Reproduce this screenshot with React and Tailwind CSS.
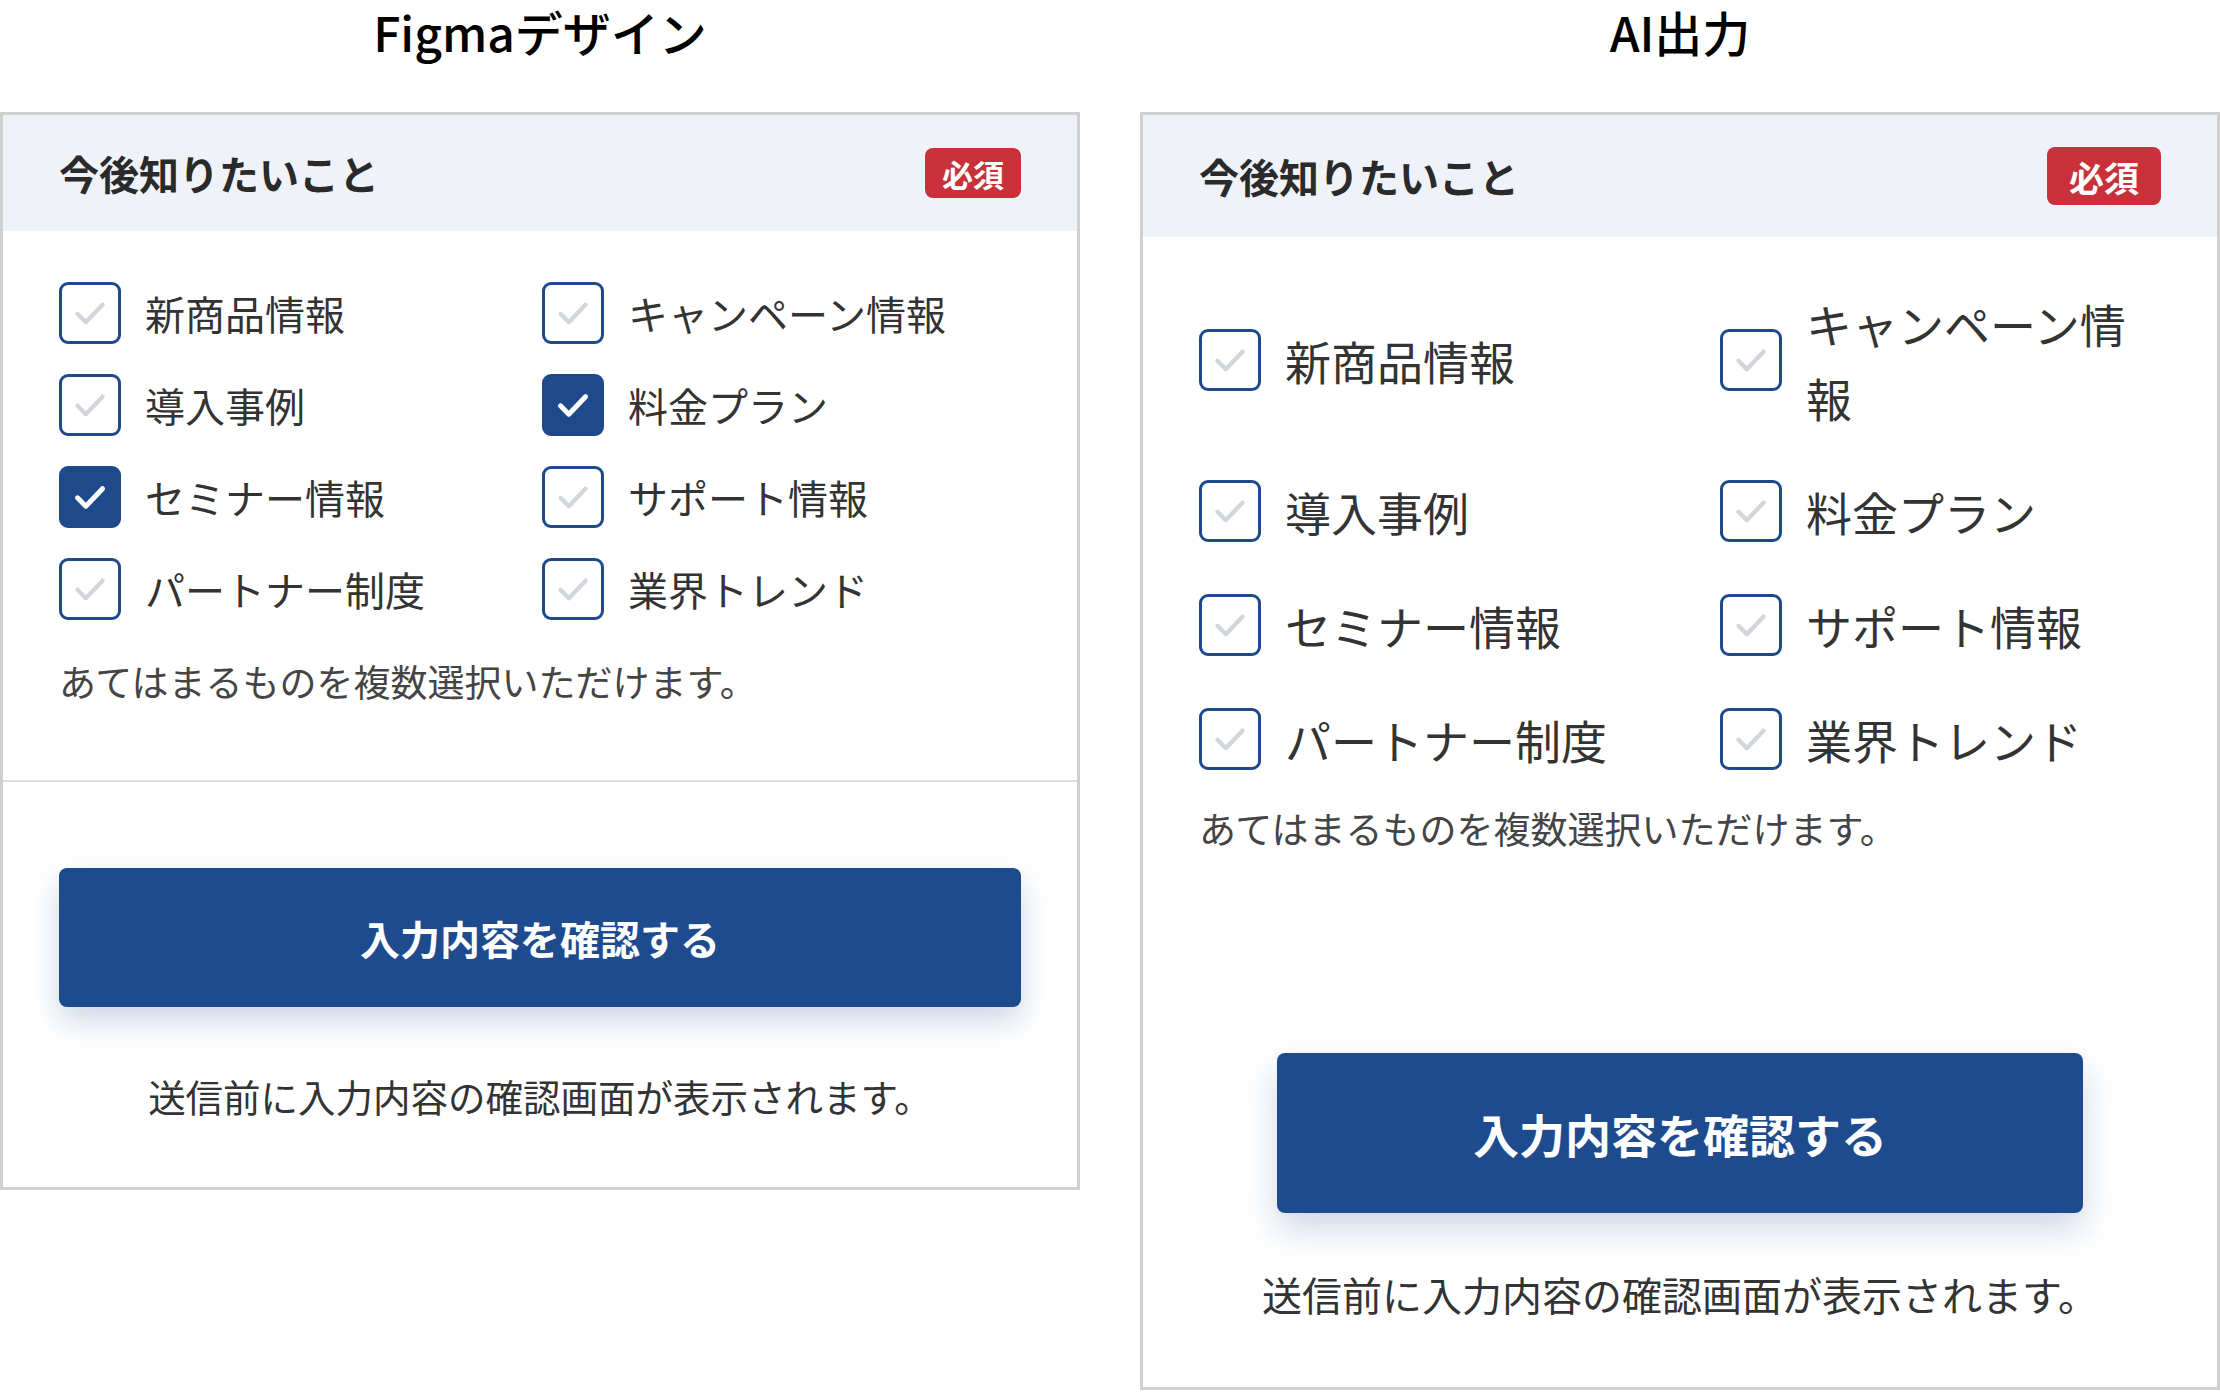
import React from "react";

function Check({ checked }) {
  return (
    <span
      className={
        "flex h-[62px] w-[62px] shrink-0 items-center justify-center rounded-[9px] border-[3px] border-[#1e4a8c] " +
        (checked ? "bg-[#1e4a8c]" : "bg-white")
      }
    >
      <svg viewBox="0 0 24 24" className="h-[40px] w-[40px]" fill="none">
        <path
          d="M4.5 12.5l5 5L19.5 7"
          stroke={checked ? "#ffffff" : "#d2d6dc"}
          strokeWidth={checked ? 3 : 2.6}
          strokeLinecap="round"
          strokeLinejoin="round"
        />
      </svg>
    </span>
  );
}

const items = [
  ["新商品情報", false],
  ["キャンペーン情報", false],
  ["導入事例", false],
  ["料金プラン", true],
  ["セミナー情報", true],
  ["サポート情報", false],
  ["パートナー制度", false],
  ["業界トレンド", false],
];

export default function App() {
  return (
    <div className="flex w-[2220px] items-start gap-[60px] bg-white font-['Noto_Sans_CJK_JP','Noto_Sans',sans-serif] text-[#2b2b2b]">
      {/* Figma column */}
      <div className="flex w-[1080px] flex-col">
        <div className="h-[112px] text-center text-[48px] font-medium leading-[62px] text-black">
          Figmaデザイン
        </div>
        <div className="border-[3px] border-[#d0d0d0]">
          <div className="flex h-[116px] items-center justify-between bg-[#eff3f9] px-[56px]">
            <h2 className="text-[40px] font-bold leading-none text-[#2a2a2a]">今後知りたいこと</h2>
            <span className="flex h-[50px] items-center rounded-[8px] bg-[#c8313a] px-[17px] text-[31px] font-bold leading-none text-white">
              必須
            </span>
          </div>
          <div className="px-[56px] pb-[72px] pt-[51px]">
            <div className="grid grid-cols-2 gap-x-[4px] gap-y-[30px]">
              {items.map(([label, checked]) => (
                <label key={label} className="flex h-[62px] items-center gap-[24px]">
                  <Check checked={checked} />
                  <span className="text-[40px] leading-[62px] text-[#333]">{label}</span>
                </label>
              ))}
            </div>
            <p className="mt-[34px] text-[37px] leading-[54px] text-[#444]">
              あてはまるものを複数選択いただけます。
            </p>
          </div>
          <div className="border-t-[2px] border-[#dcdcdc] px-[56px] pb-[64px] pt-[86px]">
            <button className="flex h-[139px] w-full items-center justify-center rounded-[8px] bg-[#1e4b8e] text-[40px] font-bold text-white shadow-[0_14px_30px_rgba(30,75,142,0.22)]">
              入力内容を確認する
            </button>
            <p className="mt-[62px] text-center text-[37.5px] leading-[54px] text-[#333]">
              送信前に入力内容の確認画面が表示されます。
            </p>
          </div>
        </div>
      </div>

      {/* AI column */}
      <div className="flex w-[1080px] flex-col">
        <div className="h-[112px] text-center text-[48px] font-medium leading-[62px] text-black">
          AI出力
        </div>
        <div className="border-[3px] border-[#d0d0d0]">
          <div className="flex h-[122px] items-center justify-between bg-[#eff3f9] px-[56px]">
            <h2 className="text-[40px] font-bold leading-none text-[#2a2a2a]">今後知りたいこと</h2>
            <span className="flex h-[58px] items-center rounded-[8px] bg-[#c8313a] px-[22px] text-[35px] font-bold leading-none text-white">
              必須
            </span>
          </div>
          <div className="px-[56px] pb-[64px] pt-[49px]">
            <div className="grid grid-cols-2 gap-x-[80px] gap-y-[40px]">
              {items.map(([label]) => (
                <label key={label} className="flex items-center gap-[24px]">
                  <Check checked={false} />
                  <span className="text-[46px] leading-[74px] text-[#333]">{label}</span>
                </label>
              ))}
            </div>
            <p className="mt-[25px] text-[37px] leading-[54px] text-[#444]">
              あてはまるものを複数選択いただけます。
            </p>
            <button className="mx-auto mt-[198px] flex h-[160px] w-[806px] items-center justify-center rounded-[8px] bg-[#1e4b8e] text-[46px] font-bold text-white shadow-[0_16px_34px_rgba(30,75,142,0.22)]">
              入力内容を確認する
            </button>
            <p className="mt-[52px] text-center text-[40px] leading-[58px] text-[#333]">
              送信前に入力内容の確認画面が表示されます。
            </p>
          </div>
        </div>
      </div>
    </div>
  );
}
